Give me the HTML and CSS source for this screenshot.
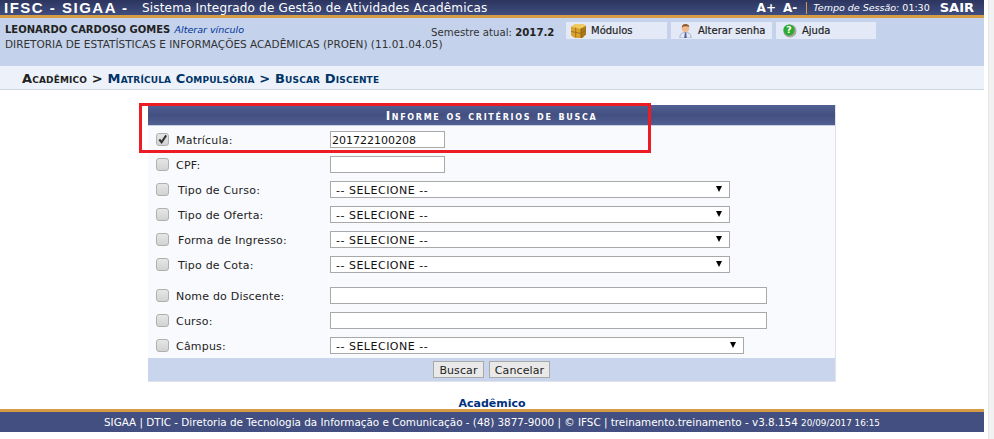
FILE: index.html
```html
<!DOCTYPE html>
<html lang="pt-BR">
<head>
<meta charset="utf-8">
<title>SIGAA</title>
<link rel="stylesheet" href="styles.css">
</head>
<body>
<div class="page">
  <header class="topbar">
    <div class="brand">IFSC - SIGAA -</div>
    <div class="system">Sistema Integrado de Gestão de Atividades Acadêmicas</div>
    <div class="session">
      <span class="font-size">A+</span>
      <span class="font-size small">A-</span>
      <span class="sep"></span>
      <span class="time"><em>Tempo de Sessão:</em> 01:30</span>
      <span class="sair">SAIR</span>
    </div>
  </header>
  <section class="userbar">
    <div class="user">
      <div class="name"><strong>LEONARDO CARDOSO GOMES</strong> <em>Alterar vínculo</em></div>
      <div class="unit">DIRETORIA DE ESTATÍSTICAS E INFORMAÇÕES ACADÊMICAS (PROEN) (11.01.04.05)</div>
    </div>
    <div class="semester">Semestre atual: <strong>2017.2</strong></div>
    <nav class="quick">
      <a class="quick-item w-mod">
        <svg class="qicon" viewBox="0 0 16 16"><path d="M0 4l5-3h7l4 2v9l-4 4H4l-4-3z" fill="#d9a32e"/><path d="M10 6l6-3v9l-4 4h-2z" fill="#a9781a"/><path d="M0 4l5-3h7l4 2-6 3z" fill="#efca60"/><path d="M5 5v10M11 5.500v10M0 9l10 2 6-3" stroke="#8f6614" stroke-width=".8" fill="none"/></svg>
        <span>Módulos</span>
      </a>
      <a class="quick-item w-alt">
        <svg class="qicon" viewBox="0 0 16 16"><path d="M2 16c0-5 3-6 6-6s6 1 6 6z" fill="#e4e8f2" stroke="#8a94b4" stroke-width=".7"/><path d="M7.300 10h1.400l.6 6H6.700z" fill="#4a5da0"/><circle cx="8" cy="5.500" r="4" fill="#eeb98e"/><path d="M4 5c0-3 2-4 4-4s4 1 4 3C10 3 6 3 4 5z" fill="#8a5a2c"/></svg>
        <span>Alterar senha</span>
      </a>
      <a class="quick-item w-aju">
        <svg class="qicon" viewBox="0 0 16 16"><circle cx="8.500" cy="8.500" r="7" fill="#a5a8a5"/><circle cx="7.500" cy="7.500" r="6" fill="#2fa92f"/><text x="7.500" y="11" text-anchor="middle" class="qmark">?</text></svg>
        <span>Ajuda</span>
      </a>
    </nav>
  </section>
  <h2 class="crumb">Acadêmico &gt; <span>Matrícula Compulsória &gt; Buscar Discente</span></h2>

  <form class="panel">
    <h3 class="panel-title">Informe os critérios de busca</h3>
    <div class="rows">
      <div class="row"><span class="check on"><svg viewBox="0 0 12 12"><path d="M2.500 6l2.500 3L10 1.500" fill="none" stroke="#333" stroke-width="2.200"/></svg></span><label class="lab">Matrícula:</label><input class="field short" value="201722100208"></div>
      <div class="row"><span class="check"></span><label class="lab">CPF:</label><input class="field short"></div>
      <div class="row"><span class="check"></span><label class="lab in">Tipo de Curso:</label><div class="sel">-- SELECIONE --</div></div>
      <div class="row"><span class="check"></span><label class="lab in">Tipo de Oferta:</label><div class="sel">-- SELECIONE --</div></div>
      <div class="row"><span class="check"></span><label class="lab in">Forma de Ingresso:</label><div class="sel">-- SELECIONE --</div></div>
      <div class="row"><span class="check"></span><label class="lab in">Tipo de Cota:</label><div class="sel">-- SELECIONE --</div></div>
      <div class="row gap"><span class="check"></span><label class="lab">Nome do Discente:</label><input class="field long"></div>
      <div class="row"><span class="check"></span><label class="lab">Curso:</label><input class="field long"></div>
      <div class="row"><span class="check"></span><label class="lab">Câmpus:</label><div class="sel wide">-- SELECIONE --</div></div>
    </div>
    <div class="actions">
      <button type="button" class="btn btn-search">Buscar</button>
      <button type="button" class="btn btn-cancel">Cancelar</button>
    </div>
    <div class="highlight"></div>
  </form>

  <div class="back">Acadêmico</div>
  <footer class="footer">SIGAA | DTIC - Diretoria de Tecnologia da Informação e Comunicação - (48) 3877-9000 | © IFSC | treinamento.treinamento - v3.8.154 <small>20/09/2017 16:15</small></footer>
</div>
<div class="scrollbar"></div>
</body>
</html>
```
FILE: styles.css
```css
* { box-sizing: border-box; }
html, body { margin: 0; height: 439px; overflow: hidden; background: #fff; }
body { display: flex; font-family: "DejaVu Sans", Verdana, sans-serif; font-size: 11px; color: #222; }
.page { width: 984px; flex: none; }
.scrollbar { width: 6px; margin-left: 4px; background: #f1f1f1; border-left: 1px solid #e6e6e6; }

.topbar { height: 18px; display: flex; align-items: center; color: #fff; padding-left: 4px;
  background: linear-gradient(#2c355f, #3f4d7e); border-bottom: 3px solid #d69c45; }
.brand { width: 138px; font: bold 15px "Liberation Sans", Arial, sans-serif; letter-spacing: 1.500px; }
.system { font-size: 12px; letter-spacing: .17px; }
.session { margin-left: auto; display: flex; align-items: center; padding-right: 10px; }
.font-size { font-weight: bold; font-size: 12px; margin-right: 7px; }
.font-size.small { font-size: 12px; margin-right: 9px; }
.sep { width: 1px; height: 12px; background: #d69c45; margin-right: 6px; }
.time { font-size: 9.500px; margin-right: 10px; }
.sair { font-weight: bold; font-size: 13px; }

.userbar { height: 48px; display: flex; background: #c4d2eb; padding-left: 5px; }
.user { width: 426px; padding-top: 5px; color: #222; font-size: 10.500px; }
.name { line-height: 12px; height: 15px; color: #222; white-space: nowrap; }
.name strong { font-size: 10px; }
.name em { color: #003399; font-size: 9.500px; font-weight: normal; margin-left: 1px; }
.unit { line-height: 12px; color: #333; white-space: nowrap; }
.semester { width: 135px; padding-top: 9px; font-size: 10.200px; color: #333; line-height: 12px; white-space: nowrap; }
.semester strong { color: #222; }
.quick { display: flex; gap: 4px; padding-top: 4px; align-items: flex-start; }
.quick-item { height: 17px; display: flex; align-items: center; gap: 5px; padding-left: 5px; background: #e3e9f6;
  font-size: 10px; color: #222; font-weight: normal; -webkit-text-stroke: .2px #222; }
.qicon { width: 15px; height: 15px; flex: none; }
.qmark { font: bold 10px "DejaVu Sans", sans-serif; fill: #fff; }
.w-mod { width: 101px; }
.w-alt { width: 101px; padding-left: 7px; }
.w-aju { width: 100px; padding-left: 6px; }

.crumb { height: 24px; margin: 0; padding: 6px 0 0 22px; background: #edf2fa; border-bottom: 1px solid #cfd6e4;
  font-size: 13px; line-height: 14px; letter-spacing: .15px; font-variant: small-caps; font-weight: bold; color: #222; }
.crumb span { color: #003366; }

.panel { position: relative; width: 688px; margin: 15px 0 0 148px; background: #f9fafd;
  border-right: 1px solid #dfe2e8; border-bottom: 1px solid #dfe2e8; }
.panel-title { height: 21px; margin: 0; padding-top: 1px; text-align: center; color: #fff; font-size: 12px; line-height: 20px;
  font-variant: small-caps; letter-spacing: 1.700px; font-weight: bold;
  background: linear-gradient(#525f92, #424f80 50%, #525f92); border-bottom: 1px solid #c8d0e4; }
.rows { padding-top: 1px; }
.row { height: 25px; display: flex; align-items: center; padding-left: 8px; }
.row.gap { margin-top: 6px; }
.check { width: 13px; height: 13px; flex: none; display: flex; border: 1px solid #b0b0b0; border-radius: 3px;
  background: linear-gradient(#e6e6e6, #d2d2d2); }
.check svg { width: 11px; height: 11px; }
.lab { width: 161px; padding: 1px 0 0 7px; color: #222; letter-spacing: .2px; }
.lab.in { padding-left: 9px; }
.field { height: 17px; padding: 1px 1px 0; border: 1px solid #a9a9a9; background: #fff; color: #111;
  font: 11px "DejaVu Sans", Verdana, sans-serif; outline: 0; }
.field.short { width: 115px; }
.field.long { width: 437px; }
.sel { position: relative; width: 400px; height: 17px; border: 1px solid #a9a9a9; background: #fff; color: #111;
  padding-left: 5px; line-height: 17px; letter-spacing: .5px; }
.sel.wide { width: 414px; }
.sel::after { content: ""; position: absolute; right: 7px; top: 4px; border-left: 3px solid transparent;
  border-right: 3px solid transparent; border-top: 6px solid #000; }
.actions { height: 23px; display: flex; justify-content: center; align-items: center; gap: 5px; background: #c8d5ec; }
.btn { height: 17px; padding: 1px 0 0; border: 1px solid #a9a9a9; background: #e9e9e9; color: #222;
  font: 11px "DejaVu Sans", Verdana, sans-serif; letter-spacing: .1px; }
.btn-search { width: 51px; }
.btn-cancel { width: 61px; }
.highlight { position: absolute; left: -9px; top: -2px; width: 512px; height: 50px; border: 3px solid #ed1c24; }

.back { height: 13px; margin-top: 14px; text-align: center; color: #003080; font-weight: bold; font-size: 11px; line-height: 15px; }
.footer { height: 23px; text-align: center; color: #fff; font-size: 10.400px; line-height: 20px;
  background: #424f80; border-top: 3px solid #d69c45; }
.footer small { font-size: 8.800px; }
```
